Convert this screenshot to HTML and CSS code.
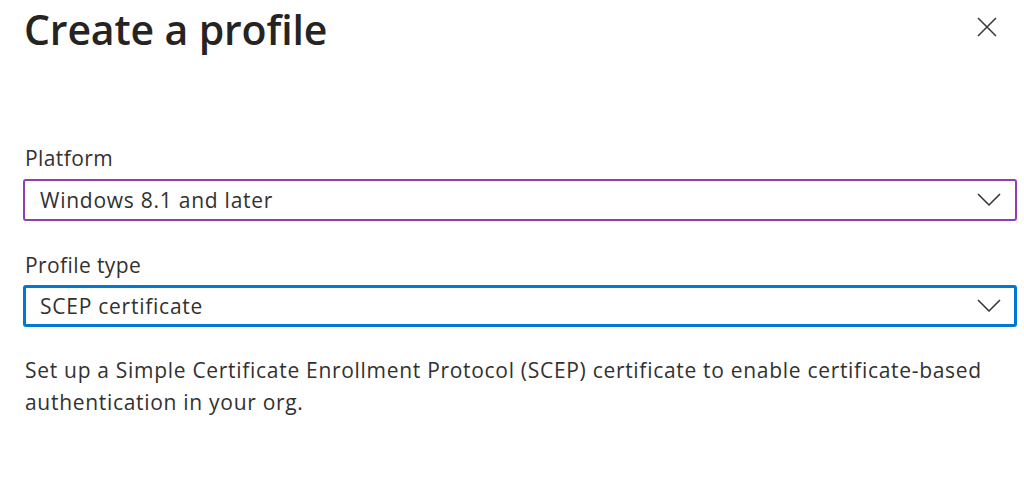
FILE: index.html
```html
<!DOCTYPE html>
<html>
<head>
<meta charset="utf-8">
<link rel="stylesheet" href="styles.css">
</head>
<body>
<div class="panel">
  <header class="head">
    <h1 class="title">Create a profile</h1>
    <button class="close" aria-label="Close">
      <svg width="20" height="20" viewBox="0 0 20 20"><path d="M1 1L19 19M19 1L1 19" stroke="#3b3a39" stroke-width="1.6" fill="none"/></svg>
    </button>
  </header>
  <div class="field">
    <label class="label">Platform</label>
    <div class="select select-purple">
      <span>Windows 8.1 and later</span>
      <svg class="chev" width="24" height="14" viewBox="0 0 24 14"><path d="M1 1L12 12L23 1" stroke="#323130" stroke-width="1.5" fill="none"/></svg>
    </div>
  </div>
  <div class="field">
    <label class="label">Profile type</label>
    <div class="select select-blue">
      <span>SCEP certificate</span>
      <svg class="chev" width="24" height="14" viewBox="0 0 24 14"><path d="M1 1L12 12L23 1" stroke="#323130" stroke-width="1.5" fill="none"/></svg>
    </div>
  </div>
  <p class="desc">Set up a Simple Certificate Enrollment Protocol (SCEP) certificate to enable certificate-based authentication in your org.</p>
</div>
</body>
</html>
```
FILE: styles.css
```css
* { box-sizing: border-box; }
html, body { margin: 0; background: #fff; }
body { font-family: "Open Sans", "Noto Sans", sans-serif; color: #323130; }
.panel { padding: 0 7px 0 23px; }
.head { display: flex; justify-content: space-between; align-items: flex-start; height: 138px; }
.title { margin: 0; padding-left: 1px; font-size: 41px; font-weight: 600; line-height: 58px; letter-spacing: -0.15px; color: #252423; }
.close { background: none; border: 0; padding: 0; margin: 17px 20px 0 0; width: 20px; height: 20px; }
.field { display: flex; flex-direction: column; }
.label { font-size: 21px; line-height: 40px; padding-left: 2px; letter-spacing: 0.4px; }
.select { display: flex; align-items: center; justify-content: space-between; height: 42px; border-radius: 3px; padding: 0 14px 0 16px; font-size: 21px; letter-spacing: 0.75px; }
.select-purple { border: 2px solid #8f3fb0; margin-bottom: 24px; margin-top: 1px; padding-left: 15px; }
.select-blue { border: 3px solid #0078d4; padding-left: 14px; padding-right: 13px; }
.desc { margin: 27px 0 0 2px; font-size: 21px; line-height: 32px; letter-spacing: 0.7px; max-width: 990px; }
```
